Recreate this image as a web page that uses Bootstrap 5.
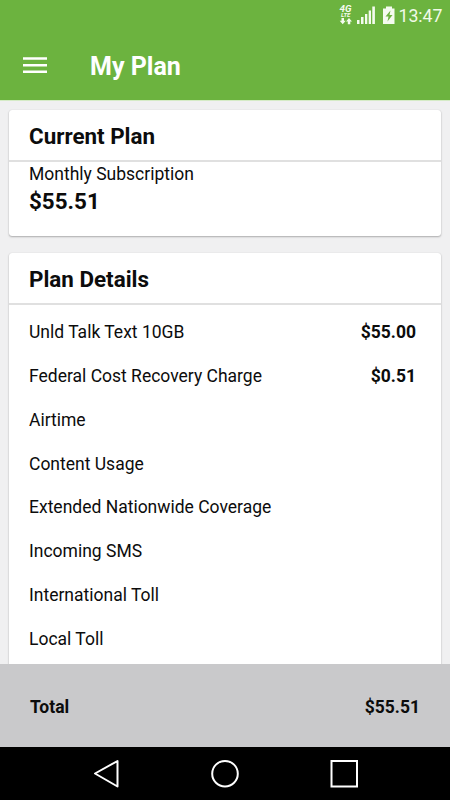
<!DOCTYPE html>
<html lang="en">
<head>
<meta charset="utf-8">
<meta name="viewport" content="width=device-width, initial-scale=1">
<title>My Plan</title>
<link href="https://cdn.jsdelivr.net/npm/bootstrap@5.3.0/dist/css/bootstrap.min.css" rel="stylesheet">
<style>
  body { font-family: Roboto, "Liberation Sans", sans-serif; font-size: 17.5px; line-height: 24px; color: #0c0c0c; background: #f0f0f1; }
  .status-bar { height: 32px; padding-right: 7.5px; }
  .clock { font-size: 17.7px; color: #f0fae8; }
  .app-header { background: #6cb33f; height: 101px; border-bottom: 1px solid #d5ebc6; }
  .app-bar { height: 68px; padding-left: 23px; }
  .app-bar svg { margin-top: -2px; }
  .app-title { font-size: 25px; line-height: 32px; margin-left: 43px; padding-top: 2px; }
  .plan-list { padding: 9px 9px 0; gap: 17px; }
  .plan-card { border-radius: 3px; box-shadow: 0 1px 2px rgba(0,0,0,.28), 0 0 1px rgba(0,0,0,.15); }
  .current-plan { height: 126px; }
  .details-card { min-height: 450px; }
  .plan-heading { height: 52px; padding: 3px 20px 0; font-size: 22.4px; border-bottom: 2px solid #e0e0e0; }
  .summary { padding: 0 20px; }
  .price { font-size: 22.4px; line-height: 31px; }
  .detail-rows { padding: 5.5px 25px 0 20px; }
  .detail-row { height: 43.75px; }
  .total-bar { background: #c9c9cb; height: 83px; padding: 3px 30px 0; }
  .nav-keys { height: 53px; }
  .nav-keys svg { display: block; }
</style>
</head>
<body>
<div class="vh-100 d-flex flex-column overflow-hidden">
  <header class="app-header flex-shrink-0 text-white">
    <div class="status-bar d-flex justify-content-end align-items-center">
      <svg width="59" height="32" viewBox="340 0 59 32" fill="#f4fbef">
        <text x="340.500" y="11.500" font-family="Roboto, sans-serif" font-size="9.800" font-weight="700" font-style="italic">4G</text>
        <text x="342" y="17" font-family="Roboto, sans-serif" font-size="6" font-weight="700" font-style="italic">LTE</text>
        <path d="M342.500 18h2.500v2.800h1.700l-3 3.400-3-3.400h1.800zM348.800 24.200v-2.800h-1.800l3-3.400 3 3.400h-1.700v2.800z"/>
        <path d="M358 20h2.500v4h-2.500zM362 17h2.500v7h-2.500zM366 14h2.300v10h-2.300zM369.700 10.500h2.300v13.500h-2.300zM373.300 6.500h2.600v17.500h-2.600z"/>
        <path fill-rule="evenodd" d="M387 6.500h6v2h2.500v15.500h-11.500v-15.500h3zM391.500 10.500l-5 6h3l-1 5 5-6.500h-3z"/>
      </svg>
      <span class="clock">13:47</span>
    </div>
    <div class="app-bar d-flex align-items-center">
      <svg width="24" height="18" viewBox="0 0 24 18" fill="#fff" role="img" aria-label="Menu"><path d="M0 1.300h24v2.500h-24zM0 8h24v2.500h-24zM0 14.500h24v2.500h-24z"/></svg>
      <h1 class="app-title fw-bold mb-0">My Plan</h1>
    </div>
  </header>
  <main class="plan-list flex-grow-1 d-flex flex-column overflow-hidden">
    <section class="plan-card current-plan card border-0 flex-shrink-0">
      <h2 class="plan-heading fw-bold mb-0 d-flex align-items-center">Current Plan</h2>
      <div class="summary">
        <div>Monthly Subscription</div>
        <div class="price fw-bold">$55.51</div>
      </div>
    </section>
    <section class="plan-card details-card card border-0 flex-shrink-0">
      <h2 class="plan-heading fw-bold mb-0 d-flex align-items-center">Plan Details</h2>
      <div class="detail-rows">
        <div class="detail-row d-flex justify-content-between align-items-center"><span>Unld Talk Text 10GB</span><span class="fw-bold">$55.00</span></div>
        <div class="detail-row d-flex justify-content-between align-items-center"><span>Federal Cost Recovery Charge</span><span class="fw-bold">$0.51</span></div>
        <div class="detail-row d-flex align-items-center">Airtime</div>
        <div class="detail-row d-flex align-items-center">Content Usage</div>
        <div class="detail-row d-flex align-items-center">Extended Nationwide Coverage</div>
        <div class="detail-row d-flex align-items-center">Incoming SMS</div>
        <div class="detail-row d-flex align-items-center">International Toll</div>
        <div class="detail-row d-flex align-items-center">Local Toll</div>
      </div>
    </section>
  </main>
  <div class="total-bar flex-shrink-0 d-flex justify-content-between align-items-center fw-bold"><span>Total</span><span>$55.51</span></div>
  <nav class="nav-keys bg-black flex-shrink-0">
    <svg width="450" height="53" fill="none" stroke="#fff" stroke-width="2" stroke-linejoin="round">
      <path d="M95 26.500L117.500 14v25.500z"/>
      <circle cx="225" cy="26.700" r="12.800"/>
      <path stroke-linejoin="miter" d="M331.500 14h25.500v25.500h-25.500z"/>
    </svg>
  </nav>
</div>
<script src="https://cdn.jsdelivr.net/npm/bootstrap@5.3.0/dist/js/bootstrap.bundle.min.js"></script>
</body>
</html>
